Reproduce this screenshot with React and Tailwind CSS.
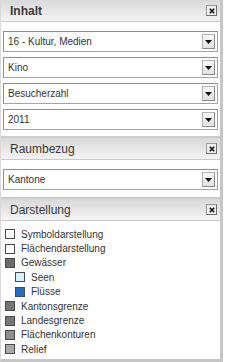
const inhaltOptions = ["16 - Kultur, Medien", "Kino", "Besucherzahl", "2011"]

const legend = [
  { label: "Symboldarstellung", fill: "bg-white" },
  { label: "Flächendarstellung", fill: "bg-white" },
  { label: "Gewässer", fill: "bg-[#6a6a6a]" },
  { label: "Seen", fill: "bg-[#d6f1f8]", indent: true },
  { label: "Flüsse", fill: "bg-[#1f6fc6]", indent: true },
  { label: "Kantonsgrenze", fill: "bg-[#747474]" },
  { label: "Landesgrenze", fill: "bg-[#777777]" },
  { label: "Flächenkonturen", fill: "bg-[#8e8e8e]" },
  { label: "Relief", fill: "bg-[#a9a9a9]" },
]

function PanelHeader({ title, bold, first }) {
  return (
    <div
      className={`flex items-center justify-between border-b border-[#c9c9c9] bg-gradient-to-b from-[#d9d9d9] to-[#f4f4f4] pl-[9px] pr-[3px] ${
        first ? "h-[22px]" : "h-[24px] border-t-2 border-t-[#cbcbcb]"
      }`}
    >
      <span className={`text-[12px] text-[#3a3a3a] ${bold ? "font-bold" : ""}`}>{title}</span>
      <div className="flex h-[11px] w-[11px] items-center justify-center border border-[#9a9a9a] border-b-[#6e6e6e] border-r-[#6e6e6e] bg-[#eeeeee]">
        <svg width="6" height="6" viewBox="0 0 6 6">
          <path d="M0.8 0.8L5.2 5.2M5.2 0.8L0.8 5.2" stroke="#111" strokeWidth="1.6" />
        </svg>
      </div>
    </div>
  )
}

function Select({ value }) {
  return (
    <div className="flex h-[21px] items-center justify-between border border-[#a4a4a4] border-l-[#8f8f8f] border-t-[#8f8f8f] bg-white pl-[4px] pr-[2px]">
      <span className="text-[10px] text-[#333]">{value}</span>
      <div className="flex h-[15px] w-[13px] items-center justify-center border border-[#b4b4b4] border-b-[#8a8a8a] border-r-[#8a8a8a] bg-gradient-to-b from-[#f8f8f8] to-[#e2e2e2]">
        <svg width="7" height="4" viewBox="0 0 7 4">
          <path d="M0 0h7L3.5 4z" fill="#111" />
        </svg>
      </div>
    </div>
  )
}

export default function App() {
  return (
    <div className="h-[362px] w-[223px] border-b-[3px] border-l border-r-[3px] border-[#c6c6c6] border-l-[#dadada] bg-white font-['Liberation_Sans',Arial,sans-serif]">
      <PanelHeader title="Inhalt" bold first />
      <div className="flex flex-col gap-[5px] px-[2px] pb-[6px] pt-[9px]">
        {inhaltOptions.map((o) => (
          <Select key={o} value={o} />
        ))}
      </div>

      <PanelHeader title="Raumbezug" />
      <div className="px-[2px] pb-[7px] pt-[9px]">
        <Select value="Kantone" />
      </div>

      <PanelHeader title="Darstellung" />
      <div className="pt-[6px]">
        {legend.map((item) => (
          <div
            key={item.label}
            className={`flex h-[14.4px] items-center ${item.indent ? "pl-[14px]" : "pl-[4px]"}`}
          >
            <div className={`h-[10px] w-[10px] border border-[#4a4a4a] ${item.fill}`} />
            <span className="ml-[6px] text-[10px] text-[#333]">{item.label}</span>
          </div>
        ))}
      </div>
    </div>
  )
}
